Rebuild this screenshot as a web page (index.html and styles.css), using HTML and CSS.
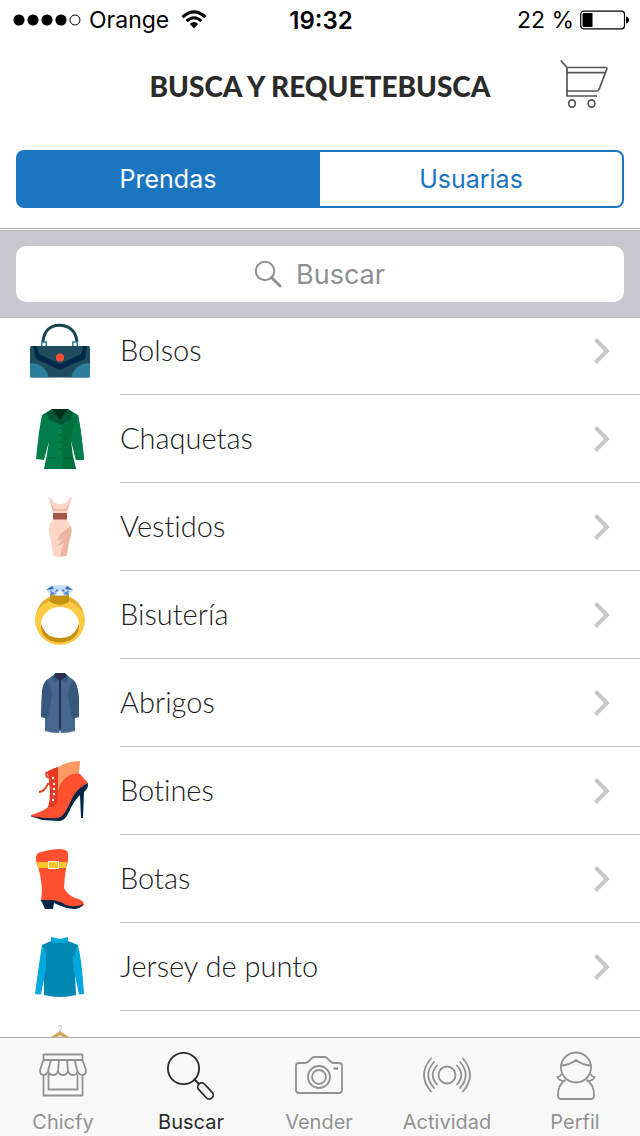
FILE: index.html
```html
<!DOCTYPE html>
<html lang="es">
<head>
<meta charset="utf-8">
<meta name="viewport" content="width=device-width">
<title>Busca y requetebusca</title>
<link rel="stylesheet" href="styles.css">
</head>
<body>
<div class="app">
  <div class="status">
    <div class="status-left">
      <svg class="signal" width="68" height="12" viewBox="0 0 68 12"><circle cx="6" cy="6" r="5.6"/><circle cx="20" cy="6" r="5.6"/><circle cx="34" cy="6" r="5.6"/><circle cx="48" cy="6" r="5.6"/><circle cx="62" cy="6" r="5" fill="#fff" stroke="#000"/></svg>
      <span>Orange</span>
      <svg class="wifi" width="26" height="20" viewBox="0 0 26 20" fill="none" stroke="#000" stroke-width="3"><path d="M1.5 7.2Q13-3.6 24.500 7.200M5.500 11.200Q13 4.200 20.500 11.200"/><path d="M8.800 14Q13 10.200 17.200 14L13 18.500Z" fill="#000" stroke="none"/></svg>
    </div>
    <time class="clock">19:32</time>
    <div class="status-right">
      <span>22 %</span>
      <svg width="49" height="20" viewBox="0 0 49 20"><rect x=".7" y="1.200" width="43.800" height="17.600" rx="3" fill="#fff" stroke="#000" stroke-width="1.200"/><path d="M3.500 3H12.500V17H3.500Q2.500 17 2.500 16V4Q2.500 3 3.500 3ZM46 6.500Q49 7.500 49 10T46 13.500Z"/></svg>
    </div>
  </div>
  <header class="header">
    <h1 class="title">BUSCA Y REQUETEBUSCA</h1>
    <button class="cart" aria-label="Carrito">
      <svg width="48" height="48" viewBox="0 0 48 48" fill="none" stroke="#555" stroke-width="1.700" stroke-linejoin="round"><path d="M.8.500 7 7.500V36H37M7 7.500H45.500Q47.200 7.500 46.800 9L39 29.500Q38.300 31 37 31H7M7 12.700H45.500"/><ellipse cx="12" cy="43.500" rx="3.300" ry="3.700"/><ellipse cx="31.500" cy="43.500" rx="3.300" ry="3.700"/></svg>
    </button>
  </header>
  <div class="segments">
    <button class="segment segment-on" aria-pressed="true">Prendas</button>
    <button class="segment" aria-pressed="false">Usuarias</button>
  </div>
  <div class="search">
    <label class="search-box">
      <svg width="28" height="28" viewBox="0 0 28 28" fill="none" stroke="#8e8e93" stroke-width="2"><circle cx="11" cy="11" r="9.200"/><path d="M17.500 17.500 26 26" stroke-width="2.800" stroke-linecap="round"/></svg>
      <input class="search-input" type="text" placeholder="Buscar" aria-label="Buscar">
    </label>
  </div>
  <main class="results">
    <ul class="list">
      <li><a class="row" href="#bolsos">
        <svg class="pic" viewBox="0 0 60 60"><path d="M13 21C14 9 21 4.200 29.500 4.200S46 9 47 21" fill="none" stroke="#174352" stroke-width="3"/><path d="M11.700 25V21h4.600v4M42.700 25V21h4.600v4" fill="none" stroke="#2d7f9b" stroke-width="1.500"/><rect y="25" width="60" height="31.500" rx="1.500" fill="#1f4d5e"/><path d="M0 42C10 42 17 48 19 56.500H1.500Q0 56.500 0 55ZM60 42C50 42 43 48 41 56.500H58.500Q60 56.500 60 55Z" fill="#2c7f9d"/><path d="M3 25H7L9 33 30 43 51 33 53 25H57L55 38 43 43 30 49 17 43 6 38Z" fill="#002949"/><circle cx="30" cy="36.500" r="4" fill="#ff4e31"/></svg>
        <span class="name">Bolsos</span><svg class="chevron" viewBox="0 0 18 26"><path d="M2.500 1.500 14 13 2.500 24.500"/></svg></a></li>
      <li><a class="row" href="#chaquetas">
        <svg class="pic" viewBox="0 0 60 60"><path d="M22 0 12 6Q9 20 6 50L14 51 19 32 17 45 14 60H46L42 45 41 32 46 51H54Q51 20 48 6L38 0Z" fill="#007d48"/><path d="M30 12 48 7 43 20 41 34 43 47 46 60H32V13Z" fill="#00703f"/><path d="M46 14 48 6Q51 20 54 50L46 51 41 30Z" fill="#007d48"/><path d="M22 0 16 5 19 8 18 10 31 16 42 10 41 8 44 5 38 0 30 11Z" fill="#005936"/><path d="M22 0H38L30 11Z" fill="#002e1c"/><path d="M18 49H26M35 49H42" stroke="#00643a"/><g fill="#00552f"><circle cx="30.500" cy="19" r=".8"/><circle cx="30.500" cy="26" r=".8"/><circle cx="30.500" cy="33" r=".8"/><circle cx="30.500" cy="40" r=".8"/></g></svg>
        <span class="name">Chaquetas</span><svg class="chevron" viewBox="0 0 18 26"><path d="M2.500 1.500 14 13 2.500 24.500"/></svg></a></li>
      <li><a class="row" href="#vestidos">
        <svg class="pic" viewBox="0 0 60 60"><path d="M18.500 0 21 1C24 6 26 7 30 7S37 6 39.500 1L42 0 38 11Q36.500 15 37 22L41 30Q42.500 37 39 45L37 59Q30 61 23.500 59L21 44Q17 34 20 27L23 22V15Q22 11 18.500 0Z" fill="#ffd5c8"/><path d="M18.500 0 23 10Q26 13 30 12 35 14 38 8L42 0 37 14H23ZM41 29 30 37 27 44 33 42 26 50 34 46 30 59H36.500L39 45Q42.500 38 41 29Z" fill="#ecb4a2"/><path d="M23 16H37V22.500H23Z" fill="#a4594b"/></svg>
        <span class="name">Vestidos</span><svg class="chevron" viewBox="0 0 18 26"><path d="M2.500 1.500 14 13 2.500 24.500"/></svg></a></li>
      <li><a class="row" href="#bisuteria">
        <svg class="pic" viewBox="0 0 60 60"><path fill-rule="evenodd" fill="#ffcb45" d="M30 10A25 25 0 1 0 30 60 25 25 0 1 0 30 10ZM30 22A19 17.500 0 0 1 30 57 19 17.500 0 0 1 30 22Z"/><path d="M11 39C10 51 19 57.500 30 57.500S50 51 49 39C45 50 38 53 30 53S15 50 11 39ZM20 9H39V17Q30 23 20 17Z" fill="#c69212"/><path d="M20 12V16Q13 18 7 26 11 15 20 12ZM39 12V16Q47 19 53 28 49 15 39 12Z" fill="#e2ac2e"/><path d="M22 1Q30-1 38 1L43 5 38 10Q30 12 22 10L16 5Z" fill="#c4dcf5"/><path d="M22 1 24 4 16 5ZM37 1 43 5 35 4Z" fill="#286abf"/><path d="M20 5 26 9 21 10ZM39 5 33 9 38 10ZM26 4 29 5 25 8ZM34 4 31 5 35 8Z" fill="#558dce"/><path d="M30 5 34 10H26Z" fill="#f4f9ff"/></svg>
        <span class="name">Bisutería</span><svg class="chevron" viewBox="0 0 18 26"><path d="M2.500 1.500 14 13 2.500 24.500"/></svg></a></li>
      <li><a class="row" href="#abrigos">
        <svg class="pic" viewBox="0 0 60 60"><path d="M25 1 18 6Q13 9 12 19L11 44 15 45V58Q21 60 29 60L30 57 31 60Q39 60 45 58V45L49 44V27Q48 10 42 6L36 1Z" fill="#48678f"/><path d="M18 6Q13 9 12 19L11 44 18 45 22 21Q21 12 17 8ZM42 6Q48 9 49 27V44L42 45 38 22Q39 12 43 8Z" fill="#35587d"/><path d="M25 1 22 5 25 10 29 6V57H31V6L36 10 38 5 35 1Z" fill="#35587d"/><path d="M25 0H35L37 3 31 7V56H29V7L24 3Z" fill="#292b52"/></svg>
        <span class="name">Abrigos</span><svg class="chevron" viewBox="0 0 18 26"><path d="M2.500 1.500 14 13 2.500 24.500"/></svg></a></li>
      <li><a class="row" href="#botines">
        <svg class="pic" viewBox="0 0 60 60"><path d="M18 10Q24 7 28 6V30L18 48Q20 38 20 30Z" fill="#e43b22"/><path d="M28 6Q38 0 50 0L49 13 28 31Z" fill="#ff9a64"/><path d="M1 54Q14 50 18 46C26 48 29 37 28 30 32 16 42 11 50 13L58 22Q49 28 46 36 39 51 34 57 30 60 1 56Z" fill="#ff5130"/><path d="M18 46C28 48 29 38 28 29V6L20 10V30Q21 40 18 46Z" fill="#e43b22"/><path d="M1 55Q16 58 28 57C36 55 39 42 44 34Q49 26 58 22 59 27 54 31L53 57H51L50 34Q43 41 39 51 35 60 29 60L12 59Z" fill="#002846"/><path d="M20 15Q16 9 16 13T22 17Q20 24 18 23 14 31 9 31" fill="none" stroke="#e43b22" stroke-width="1.800"/><g fill="#fff"><circle cx="23" cy="17" r="1.200"/><circle cx="24" cy="23" r="1.200"/><circle cx="24" cy="28" r="1.200"/><circle cx="24" cy="33" r="1.200"/><circle cx="23" cy="39" r="1.200"/></g></svg>
        <span class="name">Botines</span><svg class="chevron" viewBox="0 0 18 26"><path d="M2.500 1.500 14 13 2.500 24.500"/></svg></a></li>
      <li><a class="row" href="#botas">
        <svg class="pic" viewBox="0 0 60 60"><path d="M8 4Q21 0 29 0 37 0 38 4V12Q35 20 34 39C38 46 43 49 49 50Q54 52 54 56 49 60 39 58L26 53H11L12 40Q11 25 6 12V7Z" fill="#ff5130"/><path d="M7 13H37L36 19H8Z" fill="#ffc42e"/><path d="M18.500 12.500H28.500V19.500H18.500Z" fill="none" stroke="#fff"/><path d="M11 51H22Q30 52 36 56 45 59 54 55 50 60 44 60 37 60 31 57L24 54 23 60H15Z" fill="#002846"/></svg>
        <span class="name">Botas</span><svg class="chevron" viewBox="0 0 18 26"><path d="M2.500 1.500 14 13 2.500 24.500"/></svg></a></li>
      <li><a class="row" href="#jersey">
        <svg class="pic" viewBox="0 0 60 60"><path d="M21 4 12 8 14 34V58Q30 62 46 58L45 37 48 8 38 4Z" fill="#0087b2"/><path d="M12 8 16 16 16 32 11 57.500 5 57Q8 33 12 8ZM48 8 43 20 44 34 49 57.500 54 57Q52 25 48 8ZM21 0 30 2 38 0V5Q30 7 21 5Z" fill="#00a9dd"/></svg>
        <span class="name">Jersey de punto</span><svg class="chevron" viewBox="0 0 18 26"><path d="M2.500 1.500 14 13 2.500 24.500"/></svg></a></li>
      <li><a class="row" href="#mas" aria-label="Más prendas">
        <svg class="pic" viewBox="0 0 60 60" fill="none"><path d="M28 2Q29 0 31 1C33 4 29 4 30 7" stroke="#bfc3c7" stroke-width="1"/><path d="M18 15Q25 12 30 8 35 12 42 15" stroke="#d5a258" stroke-width="3"/></svg></a></li>
    </ul>
  </main>
  <nav class="tabs">
    <a class="tab" href="#chicfy"><svg class="tab-icon" viewBox="0 0 48 48"><path d="M4.500 8V2.500H43.500V8ZM4.500 8 1 18Q1 23 4.500 23T9 19Q10 23 14 23T19 19Q20 23 24 23T29 19Q30 23 34 23T38.500 19Q40 23 43.500 23T47 18L43.500 8M12 8 9 19M20 8 19 19M28 8 29 19M35.500 8 38.500 19M4.500 23V43.500H43.500V23M9.500 23V37.500H38.500V23"/></svg><span>Chicfy</span></a>
    <a class="tab tab-on" href="#buscar" aria-current="page"><svg class="tab-icon" viewBox="0 0 48 48"><circle cx="16.500" cy="16.500" r="15.600"/><path d="M27.500 27.500 31.500 31.500"/><rect x="29" y="35" width="19" height="8" rx="4" transform="rotate(47 38.500 39)"/></svg><span>Buscar</span></a>
    <a class="tab" href="#vender"><svg class="tab-icon" viewBox="0 0 48 48"><path d="M3.500 11H10Q12 11 14 9L17 6Q18 5 20 5H29Q31 5 32 6L35 9Q37 11 39 11H44Q47 11 47 14V38Q47 41 44 41H4Q1 41 1 38V14Q1 11 3.500 11Z"/><circle cx="24" cy="25" r="11"/><circle cx="24" cy="25" r="7"/><path d="M38.500 16.500H43" stroke-width="2.500" stroke-linecap="butt"/></svg><span>Vender</span></a>
    <a class="tab" href="#actividad"><svg class="tab-icon" viewBox="0 0 48 48"><circle cx="24" cy="23" r="8.500"/><path d="M8 6.500Q-6 23 8 39.500M11 10Q-.5 23 11 36M14 13.500Q5.500 23 14 32.500M40 6.500Q54 23 40 39.500M37 10Q48.500 23 37 36M34 13.500Q42.500 23 34 32.500"/></svg><span>Actividad</span></a>
    <a class="tab" href="#perfil"><svg class="tab-icon" viewBox="0 0 48 48"><circle cx="25" cy="15.500" r="15"/><path d="M10 13.500Q19 13 25 8 31 13 40 13.500M10 22.500Q9 25 6.500 25 8 29 13.500 29M40 22.500Q41 25 43.500 25 42 29 36.500 29M14 28Q7 33 7 43 7 47 10 47H40Q43 47 43 43 43 33 36 28"/></svg><span>Perfil</span></a>
  </nav>
</div>
</body>
</html>
```
FILE: styles.css
```css
* { box-sizing: border-box; }
body { margin: 0; background: #fff; color: #2b2b2b; font-family: Inter, "Liberation Sans", sans-serif; }
button, input { font: inherit; border: 0; padding: 0; background: none; }
a { color: inherit; text-decoration: none; }
svg { flex: none; display: block; }

.app { display: flex; flex-direction: column; height: 100vh; }

.status { display: grid; grid-template-columns: 1fr auto 1fr; align-items: center; flex: none; height: 40px; padding: 0 11px 0 13px; color: #000; font-size: 24px; }
.status-left, .status-right { display: flex; align-items: center; gap: 8px; }
.status-left { font-size: 23px; }
.wifi { margin-left: 4px; }
.status-right { justify-content: flex-end; gap: 6px; font-size: 23px; }
.clock { font-weight: 600; }

.header { display: grid; grid-template-columns: 48px 1fr 48px; align-items: center; flex: none; height: 88px; padding: 0 32px; }
.title { grid-column: 2; margin: 0; padding-top: 4px; text-align: center; font-family: "Lato Black", Lato, sans-serif; font-weight: 900; font-size: 28px; white-space: nowrap; }
.cart { display: block; }

.segments { display: grid; grid-template-columns: 1fr 1fr; flex: none; height: 58px; margin: 22px 16px; }
.segment { border: 2px solid #1b75c1; border-left: 0; border-radius: 0 8px 8px 0; color: #1b75c1; font-size: 25px; }
.segment-on { border: 0; border-radius: 8px 0 0 8px; background: #1b75c1; color: #fff; }

.search { flex: none; padding: 15px 16px; background: #c9c8ce; border-top: 1px solid #b2b2b4; border-bottom: 1px solid #b2b2b4; outline: 1px solid #fff; box-shadow: 0 -2px #b2b2b2; }
.search-box { display: flex; align-items: center; justify-content: center; gap: 14px; height: 56px; border-radius: 10px; background: #fff; }
.search-input { width: 90px; color: #2b2b2b; outline: 0; font-size: 27px; }
.search-input::placeholder { color: #8e8e93; opacity: 1; }

.results { flex: 1; min-height: 0; overflow: hidden; }
.list { margin: -11px 0 0; padding: 0; list-style: none; }
.row { display: flex; align-items: center; height: 88px; padding: 0 29px 0 30px; gap: 30px; background: linear-gradient(#c8c7cc, #c8c7cc) 120px 100% / 100% 1px no-repeat; }
.pic { width: 60px; height: 60px; }
.name { flex: 1; padding-bottom: 4px; color: #1c1c1c; font-family: "Lato Light", Lato, sans-serif; font-weight: 300; font-size: 29px; font-variant-ligatures: none; }
.chevron { width: 18px; height: 26px; fill: none; stroke: #c7c7cc; stroke-width: 4; }

.tabs { display: grid; grid-template-columns: repeat(5, 1fr); flex: none; height: 99px; border-top: 1px solid #adadad; background: #f8f8f8; }
.tab { display: flex; flex-direction: column; align-items: center; gap: 10px; padding: 14px 2px 0 0; color: #929292; font-size: 20px; line-height: 25px; }
.tab-on { color: #2b2b2b; }
.tab-icon { width: 48px; height: 48px; fill: none; stroke: currentColor; stroke-width: 1.8; stroke-linejoin: round; stroke-linecap: round; overflow: visible; }
```
